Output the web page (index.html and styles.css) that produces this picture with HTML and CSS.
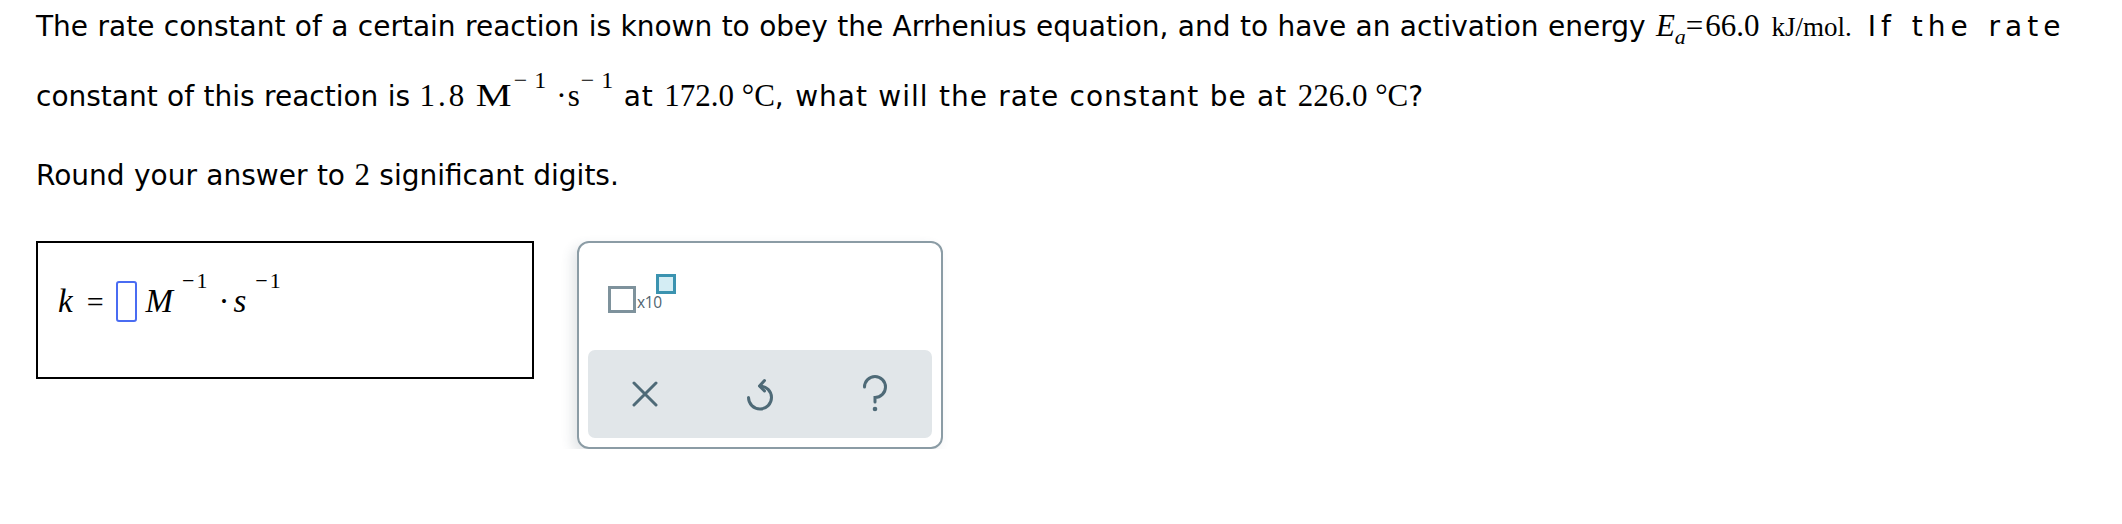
FILE: index.html
```html
<!DOCTYPE html>
<html>
<head>
<meta charset="utf-8">
<link rel="stylesheet" href="styles.css">
</head>
<body>
<div class="page">
  <div class="question">
    <div class="line l1">The rate constant of a certain reaction is known to obey the Arrhenius equation, and to have an activation energy <span class="m"><i class="E">E</i><span class="sub"><i>a</i></span><span class="eq">=</span>66.0<span class="unit">kJ/mol.</span></span><span class="tail1"> If the rate</span></div>
    <div class="line l2">constant of this reaction is <span class="m"><span class="n18">1.8</span><span class="uM">M</span><span class="sup"><span class="minus">−</span>1</span><span class="dot">·</span>s<span class="sup"><span class="minus">−</span>1</span></span><span class="tail2"> at </span><span class="m">172.0 °C</span><span class="tail2">, what will the rate constant be at </span><span class="m">226.0 °C</span><span class="tail2">?</span></div>
  </div>
  <div class="line l3">Round your answer to <span class="m">2</span> significant digits.</div>
  <div class="answer-row">
    <div class="answer-box">
      <div class="expr"><i class="ak">k</i><span class="aeq">=</span><span class="slot"></span><i class="aM">M</i><span class="asup"><span class="aminus">−</span>1</span><span class="adot">·</span><i>s</i><span class="asup"><span class="aminus">−</span>1</span></div>
    </div>
    <div class="panel">
      <div class="tools">
        <div class="x10">
          <span class="base-box"></span>
          <span class="x10-text">x10</span>
          <span class="exp-box"></span>
        </div>
      </div>
      <div class="actions">
        <div class="btn">
          <svg width="26" height="26" viewBox="0 0 26 26"><path d="M2 2 L24 24 M24 2 L2 24" stroke="#4e6a77" stroke-width="3" fill="none" stroke-linecap="round"/></svg>
        </div>
        <div class="btn">
          <svg width="28" height="34" viewBox="0 0 28 34"><path d="M14 9 A11.5 11.5 0 1 1 2.5 20.5" stroke="#4e6a77" stroke-width="3" fill="none" stroke-linecap="round"/><path d="M18.5 3.5 L13.5 9 L18.5 14" stroke="#4e6a77" stroke-width="3" fill="none" stroke-linecap="round" stroke-linejoin="round"/></svg>
        </div>
        <div class="btn">
          <svg width="26" height="38" viewBox="0 0 26 38"><path d="M2.5 12 A10.5 10.5 0 1 1 13 22.5 L13 27" stroke="#4e6a77" stroke-width="3" fill="none" stroke-linecap="round"/><circle cx="13" cy="34" r="2.3" fill="#4e6a77"/></svg>
        </div>
      </div>
    </div>
  </div>
</div>
</body>
</html>
```

FILE: styles.css
```css
html, body {
  margin: 0;
  padding: 0;
  background: #fff;
}
body {
  font-family: "DejaVu Sans", Verdana, sans-serif;
  font-size: 28px;
  word-spacing: 0.5px;
  color: #000;
}
.page {
  padding: 7px 36px 0 36px;
}
.line {
  line-height: 40px;
  white-space: nowrap;
}
.l2 {
  margin-top: 30px;
}
.l3 {
  margin-top: 39px;
}
.tail1 {
  letter-spacing: 5px;
  word-spacing: 2px;
}
.tail2 {
  letter-spacing: 1px;
}
.m {
  font-family: "Liberation Serif", "Times New Roman", serif;
  font-size: 31px;
  line-height: 1;
  word-spacing: 0;
}
.m i {
  font-style: italic;
}
.E {
  margin-left: 1px;
}
.sub {
  font-size: 22px;
  position: relative;
  top: 8px;
  line-height: 0;
  margin-left: 0;
}
.eq {
  margin: 0 2px 0 0;
}
.unit {
  margin-left: 12px;
  font-size: 27px;
}
.n18 {
  letter-spacing: 3px;
}
.uM {
  display: inline-block;
  transform: scaleX(1.3);
  margin: 0 5px 0 13px;
}
.sup {
  font-size: 24px;
  position: relative;
  top: -18px;
  line-height: 0;
  margin-left: 1px;
}
.minus {
  margin-right: 7px;
}
.dot {
  margin-left: 10px;
  margin-right: 1px;
}
.answer-row {
  display: flex;
  align-items: flex-start;
  gap: 43px;
  margin-top: 45px;
}
.answer-box {
  width: 494px;
  height: 134px;
  border: 2px solid #000;
}
.expr {
  font-family: "Liberation Serif", "Times New Roman", serif;
  font-size: 33px;
  line-height: 40px;
  padding: 38px 0 0 20px;
  white-space: nowrap;
}
.aeq {
  margin: 0 12px 0 14px;
  font-size: 30px;
}
.slot {
  display: inline-block;
  width: 17px;
  height: 37px;
  border: 2px solid #4a6cf2;
  border-radius: 3px;
  vertical-align: -10px;
  margin-right: 9px;
}
.asup {
  font-size: 22px;
  position: relative;
  top: -24px;
  margin-left: 9px;
}
.aminus {
  margin-right: 2px;
}
.adot {
  margin-left: 11px;
  margin-right: 4px;
}
.panel {
  border: 2px solid #8b9ca5;
  border-radius: 12px;
  box-shadow: -5px 5px 12px rgba(60, 80, 90, 0.14);
  padding: 0 9px 9px 9px;
  display: flex;
  flex-direction: column;
  width: 344px;
  height: 195px;
}
.tools {
  flex: 1;
  position: relative;
}
.x10 {
  position: absolute;
  left: 20px;
  top: 31px;
  width: 80px;
  height: 45px;
}
.base-box {
  position: absolute;
  left: 0;
  top: 12px;
  width: 22px;
  height: 21px;
  border: 3px solid #7e929c;
}
.x10-text {
  position: absolute;
  left: 29px;
  top: 19px;
  font-family: "Open Sans", "DejaVu Sans", sans-serif;
  font-size: 15.5px;
  line-height: 18px;
  color: #4f6470;
  letter-spacing: -0.4px;
  word-spacing: 0;
}
.exp-box {
  position: absolute;
  left: 48px;
  top: 0;
  width: 14px;
  height: 14px;
  border: 3px solid #3b93b0;
  background: #d4edf4;
}
.actions {
  height: 88px;
  background: #e1e6e9;
  border-radius: 7px;
  display: flex;
}
.btn {
  flex: 1;
  display: flex;
  align-items: center;
  justify-content: center;
}
```
